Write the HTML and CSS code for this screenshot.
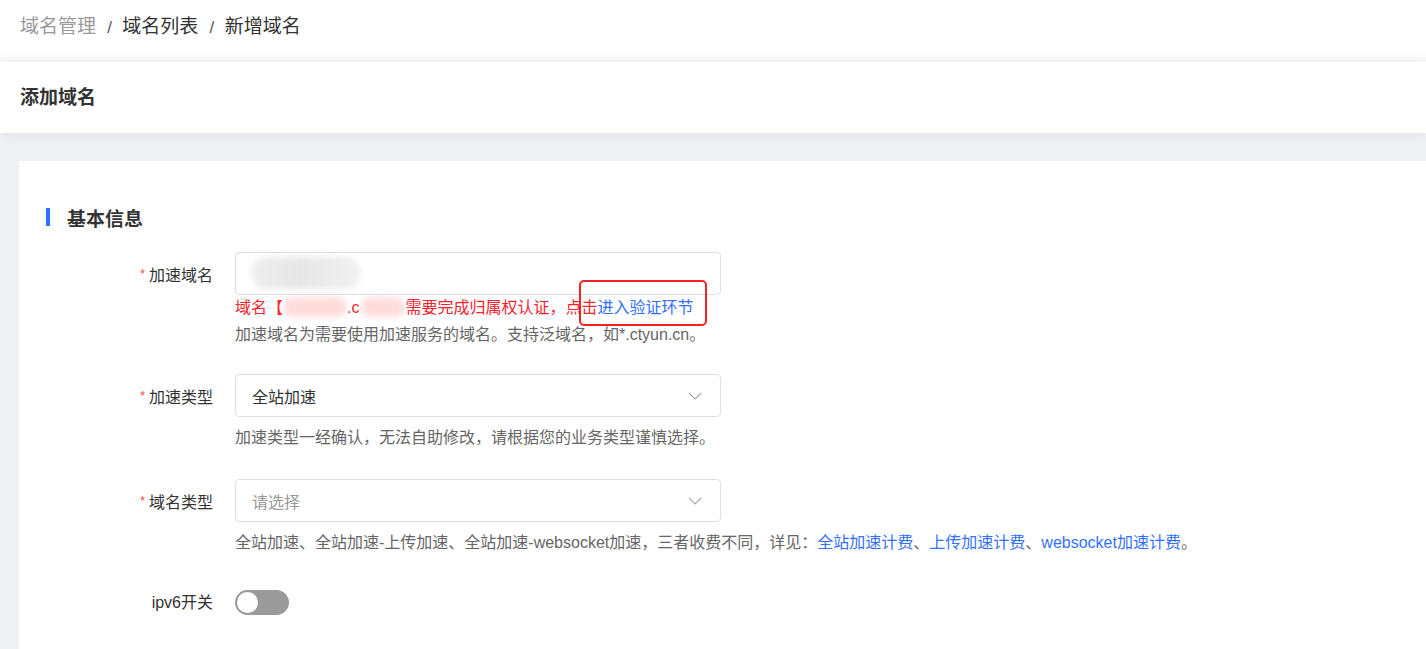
FILE: index.html
```html
<!DOCTYPE html>
<html lang="zh-CN">
<head>
    <meta charset="UTF-8">
    <meta name="viewport" content="width=device-width, initial-scale=1.0">
    <title>新增域名</title>
    <link rel="stylesheet" href="styles.css">
</head>
<body>
    <div class="breadcrumb">
        <span class="crumb muted">域名管理</span>
        <span class="sep">/</span>
        <span class="crumb">域名列表</span>
        <span class="sep">/</span>
        <span class="crumb">新增域名</span>
    </div>
    <div class="strip"></div>
    <div class="page-header">添加域名</div>

    <div class="page-body">
        <div class="card">
            <h2 class="section-title">基本信息</h2>

            <div class="form-item first">
                <label class="form-label"><span class="req">*</span>加速域名</label>
                <div class="form-control">
                    <div class="input">
                        <span class="mask mask-input"></span>
                    </div>
                    <div class="error-line">
                        域名【<span class="mask mask-pink w62"></span>.c<span class="mask mask-pink w42"></span>需要完成归属权认证，点击<a class="link verify">进入验证环节<span class="mark"></span></a>
                    </div>
                    <div class="help tight">加速域名为需要使用加速服务的域名。支持泛域名，如*.ctyun.cn。</div>
                </div>
            </div>

            <div class="form-item">
                <label class="form-label"><span class="req">*</span>加速类型</label>
                <div class="form-control">
                    <div class="input select">
                        <span class="value">全站加速</span>
                        <svg class="arrow" width="14" height="8" viewBox="0 0 14 8"><path d="M1 1l6 6 6-6" fill="none" stroke="#a8abb2" stroke-width="1.2"/></svg>
                    </div>
                    <div class="help">加速类型一经确认，无法自助修改，请根据您的业务类型谨慎选择。</div>
                </div>
            </div>

            <div class="form-item">
                <label class="form-label"><span class="req">*</span>域名类型</label>
                <div class="form-control">
                    <div class="input select">
                        <span class="value placeholder">请选择</span>
                        <svg class="arrow" width="14" height="8" viewBox="0 0 14 8"><path d="M1 1l6 6 6-6" fill="none" stroke="#a8abb2" stroke-width="1.2"/></svg>
                    </div>
                    <div class="help nowrap">全站加速、全站加速-上传加速、全站加速-websocket加速，三者收费不同，详见：<a class="link">全站加速计费</a>、<a class="link">上传加速计费</a>、<a class="link">websocket加速计费</a>。</div>
                </div>
            </div>

            <div class="form-item switch-row">
                <label class="form-label">ipv6开关</label>
                <div class="form-control">
                    <span class="switch"><span class="knob"></span></span>
                </div>
            </div>
        </div>
    </div>
</body>
</html>
```

FILE: styles.css
```css
* {
    box-sizing: border-box;
}

body {
    margin: 0;
    font-family: 'Liberation Sans', 'Noto Sans CJK SC', sans-serif;
    color: #333;
    background: #eef0f4;
    overflow: hidden;
}

.breadcrumb {
    height: 50px;
    padding: 15px 0 0 20px;
    line-height: 24px;
    background: #fff;
    font-size: 19px;
    color: #333;
}

.breadcrumb .muted {
    color: #999;
}

.breadcrumb .sep {
    margin: 0 5px 0 6px;
    color: #555;
    font-size: 17px;
}

.strip {
    height: 12px;
    background: linear-gradient(#fff, #f6f6f6);
}

.page-header {
    height: 71px;
    line-height: 71px;
    padding-left: 20px;
    background: #fff;
    font-size: 19px;
    font-weight: bold;
    color: #333;
    box-shadow: 0 3px 10px rgba(0, 0, 0, 0.05);
    position: relative;
}

.page-body {
    padding: 28px 0 0 19px;
}

.card {
    background: #fff;
    padding: 44px 0 40px;
    min-height: 520px;
}

.section-title {
    margin: 0 0 23px;
    display: flex;
    align-items: center;
    gap: 17px;
    padding-left: 27px;
    height: 24px;
    font-size: 19px;
    font-weight: bold;
    color: #333;
}

.section-title::before {
    content: '';
    width: 4px;
    height: 18px;
    background: #3370ff;
}

.form-item {
    display: flex;
    margin-bottom: 30px;
}

.form-item.first {
    margin-bottom: 28px;
}

.form-label {
    width: 216px;
    flex: none;
    padding-right: 22px;
    text-align: right;
    font-size: 16px;
    line-height: 43px;
    color: #333;
}

.req {
    color: #f54a45;
    font-size: 13px;
    margin-right: 4px;
    vertical-align: 3px;
}

.form-control {
    width: 486px;
}

.input {
    position: relative;
    height: 43px;
    border: 1px solid #dcdfe6;
    border-radius: 4px;
    background: #fff;
}

.select {
    display: flex;
    align-items: center;
    justify-content: space-between;
    padding: 0 18px 0 16px;
    font-size: 16px;
}

.placeholder {
    color: #999;
}

.arrow {
    display: block;
}

.mask {
    display: inline-block;
    filter: blur(3px);
    border-radius: 14px;
}

.mask-input {
    position: absolute;
    left: 16px;
    top: 4px;
    width: 108px;
    height: 32px;
    background: linear-gradient(90deg, #ededed 0%, #e6e6e6 45%, #f1f1f1 100%);
}

.mask-pink {
    height: 20px;
    vertical-align: -4px;
    background: #ffdcdc;
}

.w62 {
    width: 64px;
}

.w42 {
    width: 44px;
    margin-left: 2px;
}

.error-line {
    height: 22px;
    margin-top: 2px;
    font-size: 16px;
    line-height: 22px;
    color: #f5222d;
    white-space: nowrap;
}

.link {
    color: #3370ff;
    cursor: pointer;
}

.verify {
    position: relative;
}

.mark {
    position: absolute;
    left: -18px;
    right: -13px;
    top: -19px;
    bottom: -10px;
    border: 2px solid #f32121;
    border-radius: 5px;
}

.help {
    height: 22px;
    margin-top: 10px;
    font-size: 16px;
    line-height: 22px;
    color: #666;
}

.help.tight {
    margin-top: 5px;
}

.nowrap {
    white-space: nowrap;
}

.switch-row {
    margin-top: -3px;
}

.switch-row .form-control {
    display: flex;
    align-items: center;
}

.switch {
    display: inline-flex;
    align-items: center;
    width: 54px;
    height: 25px;
    padding: 2px;
    border-radius: 13px;
    background: #9a9a9a;
}

.knob {
    width: 21px;
    height: 21px;
    border-radius: 50%;
    background: #fff;
}
```
